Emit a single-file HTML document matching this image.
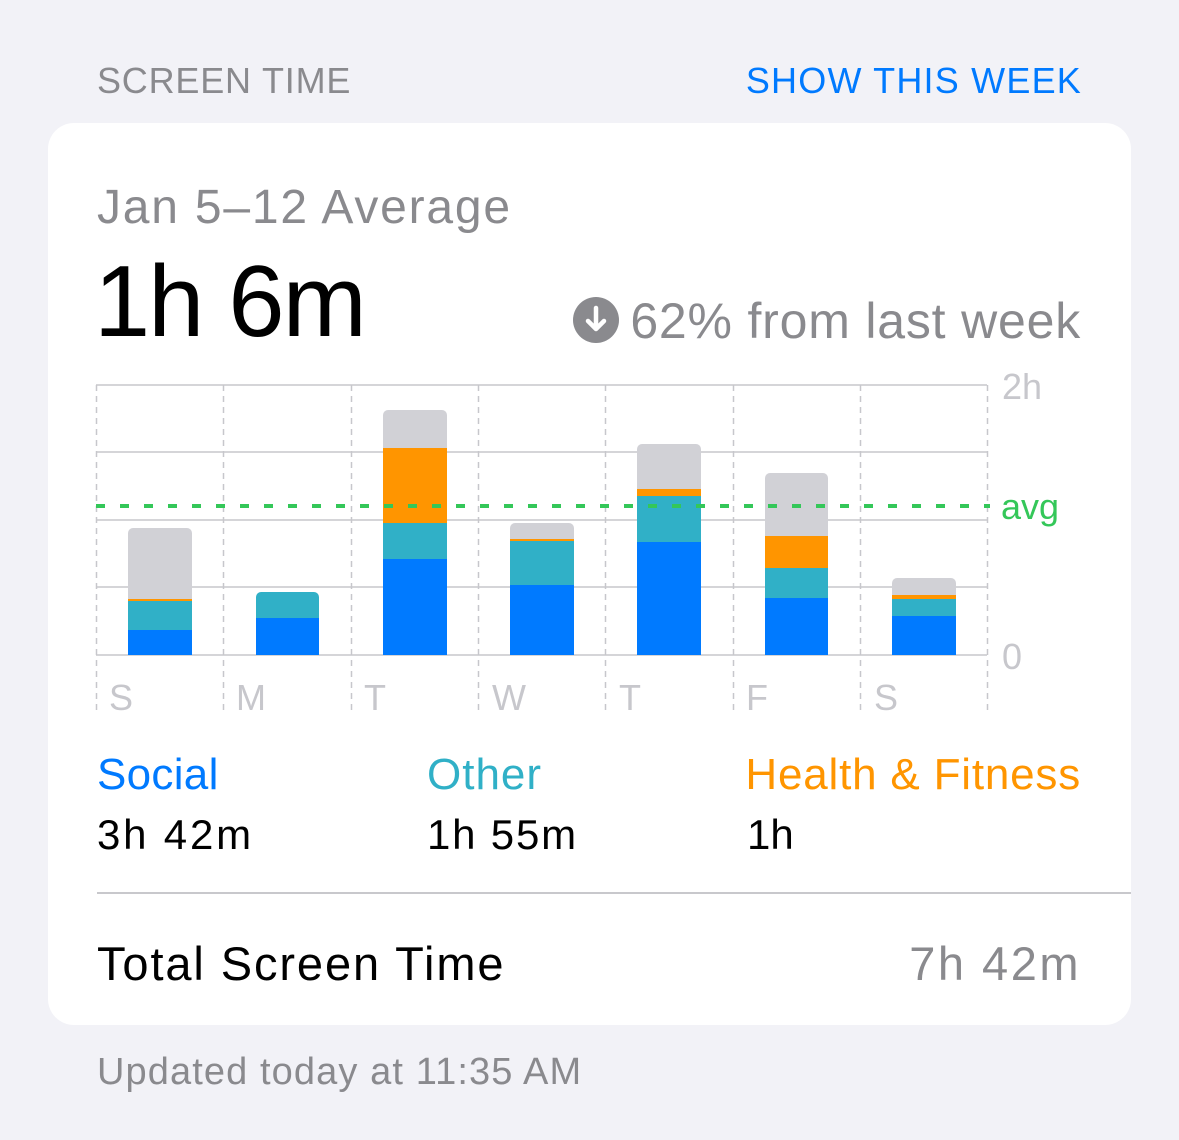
<!DOCTYPE html>
<html><head><meta charset="utf-8"><style>
*{margin:0;padding:0;box-sizing:border-box}
body{width:1179px;height:1140px;background:#f2f2f7;font-family:"Liberation Sans",sans-serif;position:relative;overflow:hidden}
.t{position:absolute;white-space:nowrap;line-height:1}
.card{position:absolute;left:48px;top:123px;width:1083px;height:902px;background:#fff;border-radius:26px}
</style></head><body>
<div class="t" style="left:97px;top:63px;font-size:36px;color:#8a8a8e;letter-spacing:0.8px">SCREEN TIME</div>
<div class="t" style="right:97px;top:63px;font-size:36px;color:#007aff;letter-spacing:1.2px">SHOW THIS WEEK</div>
<div class="card"></div>
<div class="t" style="left:97px;top:184px;font-size:48px;color:#8a8a8e;letter-spacing:1.8px">Jan 5–12 Average</div>
<div class="t" style="left:94px;top:252px;font-size:101px;color:#000;letter-spacing:-2px">1h 6m</div>
<svg style="position:absolute;left:573px;top:297px" width="46" height="46" viewBox="0 0 46 46"><circle cx="23" cy="23" r="23" fill="#8a8a8e"/><path d="M23 11v21M15 24l8 8 8-8" stroke="#fff" stroke-width="4.5" fill="none" stroke-linecap="round" stroke-linejoin="round"/></svg>
<div class="t" style="right:98px;top:296px;font-size:50px;color:#8a8a8e;letter-spacing:0.8px">62% from last week</div>
<svg style="position:absolute;left:0;top:0" width="1179" height="1140">
<g stroke="#c7c7cc" stroke-width="1.5">
<line x1="96" y1="385" x2="987" y2="385"/><line x1="96" y1="452" x2="987" y2="452"/><line x1="96" y1="520" x2="987" y2="520"/><line x1="96" y1="587" x2="987" y2="587"/><line x1="96" y1="655" x2="987" y2="655"/>
</g>
<g stroke="#c7c7cc" stroke-width="1.5" stroke-dasharray="6 5">
<line x1="96.5" y1="385" x2="96.5" y2="715"/><line x1="223.5" y1="385" x2="223.5" y2="715"/><line x1="351.5" y1="385" x2="351.5" y2="715"/><line x1="478.5" y1="385" x2="478.5" y2="715"/><line x1="605.5" y1="385" x2="605.5" y2="715"/><line x1="733.5" y1="385" x2="733.5" y2="715"/><line x1="860.5" y1="385" x2="860.5" y2="715"/><line x1="987.5" y1="385" x2="987.5" y2="715"/>
</g>
<defs>
<clipPath id="c1"><rect x="128" y="528" width="64" height="140" rx="5"/></clipPath>
<clipPath id="c2"><rect x="256" y="592" width="63" height="80" rx="5"/></clipPath>
<clipPath id="c3"><rect x="383" y="410" width="64" height="260" rx="5"/></clipPath>
<clipPath id="c4"><rect x="510" y="523" width="64" height="150" rx="5"/></clipPath>
<clipPath id="c5"><rect x="637" y="444" width="64" height="230" rx="5"/></clipPath>
<clipPath id="c6"><rect x="765" y="473" width="63" height="200" rx="5"/></clipPath>
<clipPath id="c7"><rect x="892" y="578" width="64" height="90" rx="5"/></clipPath>
</defs>
<g clip-path="url(#c1)"><rect x="128" y="528" width="64" height="71" fill="#d1d1d6"/><rect x="128" y="599" width="64" height="2" fill="#ff9500"/><rect x="128" y="601" width="64" height="29" fill="#30b0c7"/><rect x="128" y="630" width="64" height="25" fill="#007aff"/></g>
<g clip-path="url(#c2)"><rect x="256" y="592" width="63" height="26" fill="#30b0c7"/><rect x="256" y="618" width="63" height="37" fill="#007aff"/></g>
<g clip-path="url(#c3)"><rect x="383" y="410" width="64" height="38" fill="#d1d1d6"/><rect x="383" y="448" width="64" height="75" fill="#ff9500"/><rect x="383" y="523" width="64" height="36" fill="#30b0c7"/><rect x="383" y="559" width="64" height="96" fill="#007aff"/></g>
<g clip-path="url(#c4)"><rect x="510" y="523" width="64" height="16" fill="#d1d1d6"/><rect x="510" y="539" width="64" height="2" fill="#ff9500"/><rect x="510" y="541" width="64" height="44" fill="#30b0c7"/><rect x="510" y="585" width="64" height="70" fill="#007aff"/></g>
<g clip-path="url(#c5)"><rect x="637" y="444" width="64" height="45" fill="#d1d1d6"/><rect x="637" y="489" width="64" height="7" fill="#ff9500"/><rect x="637" y="496" width="64" height="46" fill="#30b0c7"/><rect x="637" y="542" width="64" height="113" fill="#007aff"/></g>
<g clip-path="url(#c6)"><rect x="765" y="473" width="63" height="63" fill="#d1d1d6"/><rect x="765" y="536" width="63" height="32" fill="#ff9500"/><rect x="765" y="568" width="63" height="30" fill="#30b0c7"/><rect x="765" y="598" width="63" height="57" fill="#007aff"/></g>
<g clip-path="url(#c7)"><rect x="892" y="578" width="64" height="17" fill="#d1d1d6"/><rect x="892" y="595" width="64" height="4" fill="#ff9500"/><rect x="892" y="599" width="64" height="17" fill="#30b0c7"/><rect x="892" y="616" width="64" height="39" fill="#007aff"/></g>
<line x1="96" y1="506" x2="990" y2="506" stroke="#34c759" stroke-width="4" stroke-dasharray="9 15"/>
<g font-family="Liberation Sans, sans-serif" font-size="36" fill="#c7c7cc">
<text x="1002" y="399">2h</text><text x="1002" y="669">0</text>
<text x="109" y="710">S</text><text x="236" y="710">M</text><text x="364" y="710">T</text><text x="492" y="710">W</text><text x="619" y="710">T</text><text x="746" y="710">F</text><text x="874" y="710">S</text>
</g>
<text x="1001" y="519" font-family="Liberation Sans, sans-serif" font-size="36" fill="#34c759">avg</text>
</svg>
<div class="t" style="left:97px;top:753px;font-size:44px;color:#007aff;letter-spacing:0.3px">Social</div>
<div class="t" style="left:427px;top:753px;font-size:44px;color:#30b0c7;letter-spacing:1px">Other</div>
<div class="t" style="right:98px;top:753px;font-size:44px;color:#ff9500;letter-spacing:0.8px">Health &amp; Fitness</div>
<div class="t" style="left:97px;top:814px;font-size:42px;color:#000;letter-spacing:2.8px">3h 42m</div>
<div class="t" style="left:427px;top:814px;font-size:42px;color:#000;letter-spacing:1.8px">1h 55m</div>
<div class="t" style="left:747px;top:814px;font-size:42px;color:#000">1h</div>
<div style="position:absolute;left:97px;top:892px;width:1034px;height:1.5px;background:#c8c8cc"></div>
<div class="t" style="left:97px;top:940px;font-size:47px;color:#000;letter-spacing:1.9px">Total Screen Time</div>
<div class="t" style="right:98px;top:940px;font-size:47px;color:#8a8a8e;letter-spacing:2.5px">7h 42m</div>
<div class="t" style="left:97px;top:1053px;font-size:38px;color:#8a8a8e;letter-spacing:1.1px">Updated today at 11:35 AM</div>
</body></html>
